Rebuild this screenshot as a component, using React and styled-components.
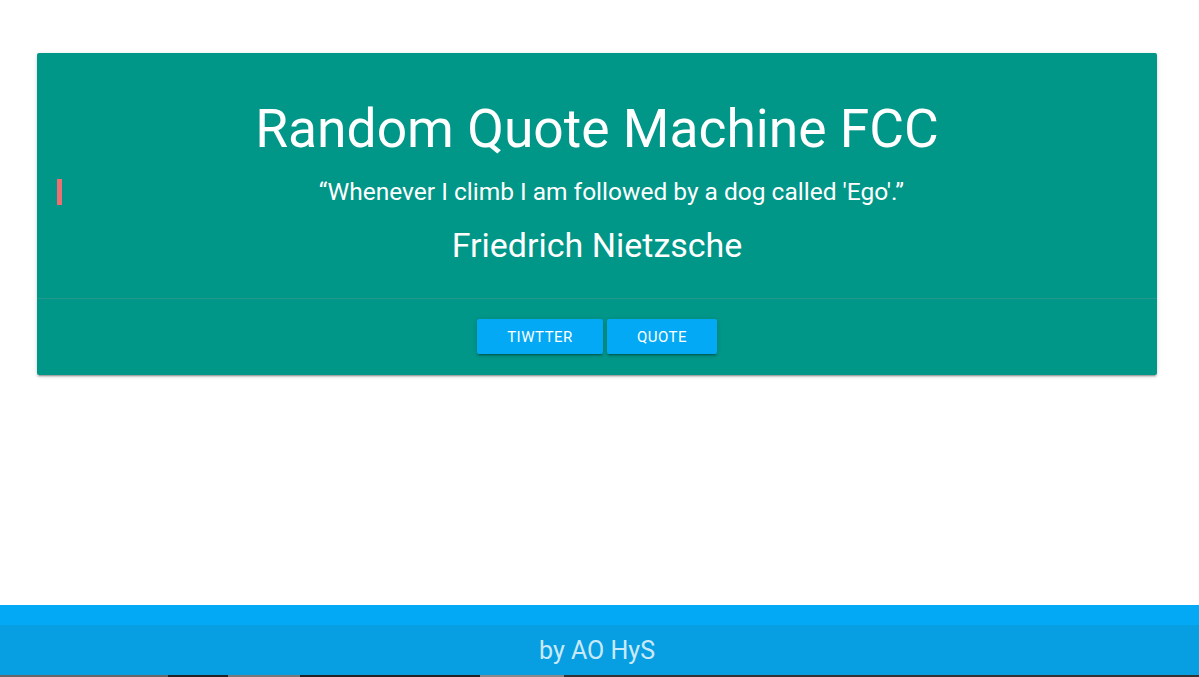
import React from 'react'
import styled, { createGlobalStyle } from 'styled-components'

const GlobalStyle = createGlobalStyle`
  html, body {
    margin: 0;
    padding: 0;
    background: #fff;
    font-family: Roboto, "Liberation Sans", sans-serif;
  }
  * { box-sizing: border-box; }
`

const Page = styled.div`
  min-height: 100vh;
  display: flex;
  flex-direction: column;
`

const Main = styled.main`
  flex: 1;
  padding: 53px 42px 0 37px;
`

const Card = styled.div`
  background-color: #009688;
  border-radius: 2px;
  box-shadow: 0 2px 2px 0 rgba(0,0,0,0.14), 0 1px 5px 0 rgba(0,0,0,0.12), 0 3px 1px -2px rgba(0,0,0,0.2);
  color: #fff;
`

const CardContent = styled.div`
  padding: 20px 20px 12px;
  text-align: center;
`

const Title = styled.h1`
  margin: 29px 0 0;
  font-size: 53.4px;
  font-weight: 400;
  line-height: 1;
`

const Quote = styled.blockquote`
  margin: 24px 0 0;
  padding-left: 24px;
  border-left: 5px solid #ee6e73;
  font-size: 24.5px;
  line-height: 26px;
`

const Author = styled.h4`
  margin: 20px 0 0;
  font-size: 34px;
  font-weight: 400;
  line-height: 40px;
  padding-bottom: 21px;
`

const CardAction = styled.div`
  border-top: 1px solid rgba(160,160,160,0.2);
  padding: 20px 24px 21px;
  display: flex;
  justify-content: center;
  gap: 4px;
`

const Button = styled.button`
  height: 35px;
  width: ${(props) => props.w}px;
  border: none;
  border-radius: 2px;
  background-color: #03a9f4;
  color: #fff;
  font-family: Roboto, "Liberation Sans", sans-serif;
  font-size: 15px;
  text-transform: uppercase;
  letter-spacing: 0.5px;
  box-shadow: 0 2px 2px 0 rgba(0,0,0,0.14), 0 1px 5px 0 rgba(0,0,0,0.12), 0 3px 1px -2px rgba(0,0,0,0.2);
  cursor: pointer;
`

const Footer = styled.footer`
  background-color: #03a9f4;
  padding-top: 20px;
`

const FooterCopy = styled.div`
  background-color: #089fe2;
  height: 50px;
  padding-right: 5px;
  display: flex;
  align-items: center;
  justify-content: center;
  color: rgba(255,255,255,0.8);
  font-size: 25px;
`

const BottomEdge = styled.div`
  height: 2px;
  background: linear-gradient(90deg, #666 0 14%, #222 14% 19%, #777 19% 25%, #222 25% 40%, #888 40% 47%, #333 47% 100%);
`

export default function App() {
  return (
    <Page>
      <GlobalStyle />
      <Main>
        <Card>
          <CardContent>
            <Title>Random Quote Machine FCC</Title>
            <Quote>“Whenever I climb I am followed by a dog called 'Ego'.”</Quote>
            <Author>Friedrich Nietzsche</Author>
          </CardContent>
          <CardAction>
            <Button w={126}>Tiwtter</Button>
            <Button w={110}>Quote</Button>
          </CardAction>
        </Card>
      </Main>
      <Footer>
        <FooterCopy>by AO HyS</FooterCopy>
        <BottomEdge />
      </Footer>
    </Page>
  )
}
